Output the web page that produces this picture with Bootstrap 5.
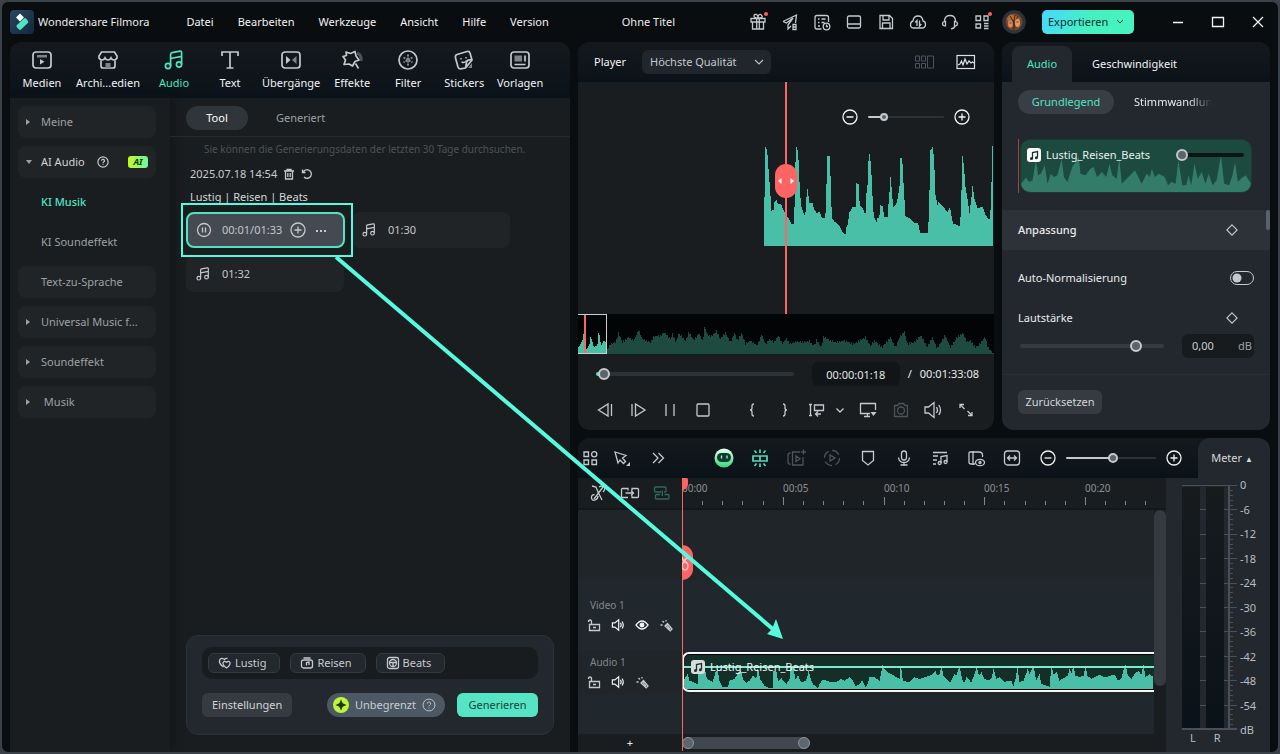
<!doctype html>
<html lang="de" data-bs-theme="dark">
<head>
<meta charset="utf-8">
<meta name="viewport" content="width=device-width, initial-scale=1">
<title>Wondershare Filmora</title>
<link href="https://cdn.jsdelivr.net/npm/bootstrap@5.3.0/dist/css/bootstrap.min.css" rel="stylesheet">
<style>
:root{--teal:#50e3c2;--bg:#0a0d0f;--pane:#1a1d1f;--soft:#212427;--slate:#22282d;--red:#ff6464;--mark:#55fbdc;--line:#c4c9ce}
body{font:11px/16px "Noto Sans","Open Sans",sans-serif;background:#3a4148;color:#e9ebed}
button,input,select{font:inherit;color:inherit}
button{background:none;border:0;padding:0}
svg{display:block;flex:none}
.ico{width:20px;height:20px;fill:none;stroke:var(--line);stroke-width:1.3}
.i10{width:10px;height:10px}.i12{width:12px;height:12px}.i14{width:14px;height:14px}.i16{width:16px;height:16px}
.white{stroke:#f2f3f4}.dim{stroke:#4d5358}.heavy{stroke-width:1.7}
.solid{fill:var(--line);stroke:none}.grey{fill:#7d838a;stroke:none}
.gap12{gap:12px}.gap10{gap:10px}.gap20{gap:20px}
.app{background:var(--bg);border:2px solid #3a4148;border-radius:8px;min-height:100vh;overflow:hidden}
.titlebar{height:40px;padding:0 10px 0 8px}
.logo{width:24px;height:24px}
.menu{margin-left:37px}
.menu a{color:#f2f3f4;text-decoration:none}
.dot{width:4px;height:4px;border-radius:50%;background:#ff5c5c;top:0;right:0}
.avatar{width:24px;height:24px;margin-left:-2px}
.export{width:92px;height:24px;border-radius:5px;background:linear-gradient(115deg,#47d8ff,#47f0c0 50%,#45f4bd);color:#10302c;padding-left:6px}
.winctl{gap:20px;margin-left:22px}
.work{display:grid;grid-template-columns:minmax(0,560fr) minmax(0,416fr) 268px;grid-template-rows:388px minmax(314px,1fr);gap:8px;padding:0 8px}
.pane{background:var(--pane);border-radius:12px;overflow:hidden}
.bar{background:linear-gradient(#15191d,#0a1219)}
.media{grid-row:1/3}
.media-tabs{height:56px;padding-left:4px}
.media-tabs button{min-width:56px;padding:0 4px;text-align:center;color:#f2f3f4;height:56px}
.media-tabs .wide{min-width:66px}
.media-tabs .xwide{min-width:76px}
.media-tabs svg{margin:0 auto 5px;width:24px;height:20px;stroke-width:1.7}
.media-tabs .on{color:var(--teal)}.media-tabs .on svg{stroke:var(--teal)}
.side{width:160px;padding:8px;box-shadow:4px 0 6px #14171a}
.side button{height:32px;width:138px;border-radius:8px;color:#9da1a5;text-align:left}
.side .boxed{background:var(--soft)}
.side .open{color:#d0d3d6}
.side .picked{color:var(--teal);font-weight:500}
.arr,.noarr{width:23px;padding-left:8px}
.arr::before{content:"";display:block;border:3px solid transparent;border-left:4px solid #9da1a5;border-right:0;width:0}
.arr.down::before{border:3px solid transparent;border-top:4px solid #9da1a5;border-bottom:0}
.helpdot{margin-left:12px;stroke-width:2}
.ai{width:20px;height:12px;border-radius:3px;background:linear-gradient(90deg,#c4fb20,#6df5a0);color:#163018;font:italic 700 9px/12px "Noto Sans",sans-serif;text-align:center}
.sub{height:39px;padding:2px 0 0 16px;border-bottom:1px solid #25292c;gap:12px}
.sub button{height:24px;border-radius:12px;color:#9da1a5}
.sub .on{background:#303539;color:#fff;width:62px}
.note{font-size:10px;color:#4d5256;padding:4px 0 0 18px}
.lib{padding:0 16px}
.stamp{padding:9px 0 7px 4px;color:#c7cbcf;gap:6px}
.title3{padding:0 0 7px 4px;color:#d4d7da}
.cards{display:grid;grid-template-columns:158px 158px;gap:8px}
.clipcard{height:36px;background:var(--soft);border-radius:8px;padding:0 10px;color:#c2c6ca;gap:12px}
.clipcard.on{position:relative;z-index:1;background:#454a52;border:2px solid var(--teal);padding:0 8px;gap:6px;width:159px}
.frame{position:absolute;inset:-11px -10px -11px -7px;border:2px solid var(--mark);pointer-events:none}
.prompt{margin:auto 16px 17px;border:1px solid #2b3136;background:var(--slate);border-radius:12px;padding:11px 15px 17px}
.tags{height:32px;background:#181c1e;border-radius:10px;padding:0 6px;gap:10px;margin-bottom:14px}
.tags button{height:20px;border:1px solid #343a3f;border-radius:6px;background:var(--slate);color:#c7cbcf;padding:0 13px 0 9px;gap:3px}
.pbtn{height:24px;border-radius:6px;background:#353b41;color:#d2d5d8;padding:0 10px}
.reset{padding:0 6px;width:84px}
.unl{height:24px;border-radius:12px;background:#4c5864;color:#c8ced4;width:118px;padding:0 9px 0 6px}
.gen{background:#55e5c5;color:#19413a;width:81px}
.phead{height:40px;padding:0 18px 0 16px;color:#f2f3f4}
.form-select.qual{width:129px;height:24px;border:0;border-radius:6px;font-size:11px;line-height:16px;margin-left:16px;background-color:#20262c;color:var(--line);padding:0 20px 0 8px;background-position:right 7px center;background-size:10px;background-image:url("data:image/svg+xml,%3Csvg xmlns='http://www.w3.org/2000/svg' viewBox='0 0 10 10'%3E%3Cpath d='M1 3l4 4 4-4' fill='none' stroke='%23b8bdc2' stroke-width='1.2'/%3E%3C/svg%3E")}
.stage{height:232px;position:relative}
.zoomer{padding:25px 22px 19px 0;gap:8px}
.zoomer input{width:76px}
.wavebox{width:229px;height:100px;margin-left:auto;margin-right:1px}
.needle{position:absolute;left:50%;top:0;bottom:0;width:2px;background:var(--red);margin-left:-1px}
.grip{position:absolute;left:50%;top:82px;width:22px;height:34px;margin-left:-11px;border-radius:11px;background:var(--red)}
.over{height:40px;background:#030405;position:relative}
.over svg{width:100%;height:40px}
.win{position:absolute;left:0;top:0;width:29px;height:40px;border:1px solid #c9ced2;border-left:0}
.win::after{content:"";position:absolute;left:6px;top:0;bottom:0;width:2px;background:var(--red)}
input[type=range]{appearance:none;background:none;height:14px;margin:0;display:block;--on:var(--line);--off:#2d3237;--th:12px}
input[type=range]::-webkit-slider-runnable-track{height:var(--tr,2px);border-radius:2px;background:linear-gradient(90deg,var(--on) var(--v,50%),var(--off) var(--v,50%))}
input[type=range]::-webkit-slider-thumb{appearance:none;width:var(--th);height:var(--th);margin-top:calc((var(--tr,2px) - var(--th))/2);border-radius:50%;border:2px solid var(--line);background:#5c636b}
input[type=range].sm-thumb{--th:8px}
input[type=range].md-thumb{--th:10px}
input[type=range].seek{--on:#50e3c2;--tr:4px}
input[type=range].flat{--on:#353a42;--off:#353a42;--tr:4px}
input[type=range].clipvol{--on:#0b1512;--off:#0b1512;--tr:4px;width:68px}
.seekrow{padding:8px 15px 0 18px}
.tc{height:24px;border:0;border-radius:6px;background:#121517;color:#e3e5e7;text-align:center;width:88px;margin-left:18px}
.ctrls{padding:14px 18px 0 17px}
.side-tabs{height:40px;padding-left:10px}
.side-tabs button{height:36px;margin-top:4px;padding:0 20px;color:#f2f3f4;border-radius:8px 8px 0 0}
.side-tabs .on{background:var(--slate);color:var(--teal);width:60px;padding:0}
.insp{background:var(--slate)}
.modes{padding:8px 16px 25px;gap:20px}
.modes .on{height:24px;width:96px;border-radius:12px;background:#383e45;color:var(--teal)}
.fade-r{-webkit-mask-image:linear-gradient(90deg,#000 70%,transparent);mask-image:linear-gradient(90deg,#000 70%,transparent)}
.aclip{height:54px;margin:0 18px 17px 16px;border-left:1px solid #a1453f;padding-left:1px}
.aclip>div{position:relative;height:54px;background:#1c4a3f;border-radius:10px;border:1px solid #173a31;overflow:hidden}
.aclip .wv{position:absolute;inset:0;width:100%;height:52px}
.aclip .top{position:relative;height:30px;padding:0 7px 0 6px;color:#e8f0ee;gap:5px}
.sec{height:40px;background:#2d3238;padding:0 32px 0 16px;position:relative;font-weight:500}
.sec::after{content:"";position:absolute;right:0;top:0;width:4px;height:20px;border-radius:2px;background:#59616a}
.opt{padding:20px 16px 12px}
.opt2{padding:12px 32px 8px 16px}
.volrow{padding:0 16px 16px 18px;gap:18px}
.field{width:72px;height:24px;border-radius:6px;background:#181b1d;padding:0 2px 0 10px;color:#9da1a5}
.field input{width:36px;border:0;background:none;color:#c9cdd1;padding:0}
.form-check-input.sw{width:24px;height:14px;margin:0;float:none;display:block;background-color:transparent;border:1px solid var(--line);border-radius:7px;background-position:left center;background-image:url("data:image/svg+xml,%3Csvg xmlns='http://www.w3.org/2000/svg' viewBox='-4 -4 8 8'%3E%3Ccircle r='3' fill='%23c4c9ce'/%3E%3C/svg%3E")}
.foot{border-top:1px solid #2a2f34;padding:15px 16px}
.tl{grid-column:2/4;background:var(--pane);border-radius:12px 12px 0 0}
.tlbar{height:40px;border-radius:12px 12px 0 0}
.tlleft{padding:0 14px 0 2px}
.tltools{margin-left:46px}
.tltools input{width:90px;margin:0 -8px}
.tltools input[type=range]{margin:0 -8px}
.meterbtn{width:72px;height:40px;background:var(--slate);border-radius:12px 12px 0 0;color:#d6d9dc;padding-right:4px}
.tri{font-size:8px}
.heads{width:104px;padding-left:12px;flex:none}
.row-r{height:32px;border-bottom:2px solid #12171c}
.row-r .heads{gap:12px;padding-left:10px}
.lanes{position:relative}
.lane{background:#20272d}
.lane.alt{background:#1f2528}
.lane .heads{color:#81878d;font-size:10px;line-height:14px}
.l-video{height:70px}.l-audio{height:45px}.l-free{height:39px}
.l-video .heads{padding-top:18px}.l-audio .heads{padding-top:5px}
.trk{gap:10px;margin:6px 0 0 -3px}
.tclip{height:40px;margin-top:2px;border:2px solid #f4f6f7;border-right:0;border-radius:7px 0 0 7px;background:#142e28;position:relative;overflow:hidden;box-shadow:inset 0 1px #000,inset 0 -1px #000}
.tclip .wv{position:absolute;left:0;bottom:1px;width:469px;height:24px}
.vol{position:absolute;left:0;right:0;top:12px;height:2px;background:#7be9d0}
.tlabel{position:relative;color:#f2f3f4;padding:5px 0 0 7px;gap:5px}
.vbar{width:12px}
.vbar i{display:block;height:176px;border-radius:6px;background:#353a41}
.trackfoot{height:18px;padding-bottom:1px}
.hbar{width:128px;height:12px;border-radius:6px;background:#40474e}
.hbar i{width:12px;height:12px;border-radius:50%;background:#5d666f;border:1px solid #8b949c}
.ph{position:absolute;left:104px;top:0;bottom:1px;width:1px;background:var(--red)}
.flag{position:absolute;left:0;top:0;width:6px;height:12px;background:var(--red);border-radius:0 2px 8px 0}
.cut{position:absolute;left:0;top:67px;width:11px;height:35px;border-radius:0 11px 11px 0;background:var(--red)}
.meter{width:104px;background:var(--slate);padding-left:16px;color:#b9bec3}
.lr{padding-left:8px;gap:18px}
.scale{height:261px;padding-left:2px;margin-top:-1px}
.callout{position:absolute;left:0;top:0;width:100%;height:100%;pointer-events:none;z-index:2}
</style>
</head>
<body>
<svg width="0" height="0" class="position-absolute" aria-hidden="true">
<symbol id="music" viewBox="0 0 20 20"><circle cx="4" cy="16" r="2.6"/><circle cx="15" cy="14.5" r="2.6"/><path d="M6.600 16V4.500Q6.600 3 8 2.700L16 1.200Q17.600 1 17.600 2.500V14.500M6.600 8.500L17.600 6.300"/></symbol>
<symbol id="plus" viewBox="0 0 20 20"><circle cx="10" cy="10" r="7"/><path d="M6.500 10h7M10 6.500v7"/></symbol>
<symbol id="minus" viewBox="0 0 20 20"><circle cx="10" cy="10" r="7"/><path d="M6.500 10h7"/></symbol>
<symbol id="ask" viewBox="0 0 20 20"><circle cx="10" cy="10" r="8.500"/><path d="M7.500 8a2.500 2.300 0 1 1 3.700 2q-1.200.8-1.200 2M10 13.800v1.200"/></symbol>
<symbol id="dia" viewBox="0 0 14 14"><path d="M7 1l6 6-6 6-6-6z"/></symbol>
<symbol id="spk" viewBox="0 0 20 20"><path d="M2 7h3.500L11 2.500v15L5.500 13H2zM13.500 7q2 3 0 6M15.800 5q3.400 5 0 10"/></symbol>
<symbol id="lock" viewBox="0 0 14 14"><path d="M2.500 6.500h10v6h-10zM4.500 6.500V4Q4.500 2 3 2T1.500 4M6 9.500h3"/></symbol>
<symbol id="mic" viewBox="0 0 14 14"><path d="M6 8l2.500-2.500L13 11l-1.800 1.800zM7.300 6.600l3.700 4.500M3.500 3l1.500 1.500M7 2v1.500M1.500 7H3.500"/></symbol>
<symbol id="clipnote" viewBox="0 0 14 14"><rect width="14" height="14" rx="3"/><path d="M5.500 10.500V4.500L10.500 3.500V9.500" fill="none" stroke="#17352e" stroke-width="1.300"/><circle cx="4.500" cy="10.500" r="1.500" fill="#17352e"/><circle cx="9.400" cy="9.700" r="1.500" fill="#17352e"/></symbol>
</svg>
<div class="app d-flex flex-column position-relative">
<header class="titlebar d-flex align-items-center">
  <svg class="logo" viewBox="0 0 24 24"><defs><linearGradient id="lg" x1="0" y1="0" x2="1" y2="1"><stop stop-color="#2c4560"/><stop offset="1" stop-color="#12293c"/></linearGradient></defs><rect width="24" height="24" rx="4" fill="url(#lg)"/><path d="M10 3.500l4 4-4 4-4-4z" fill="#fff"/><path d="M14 8.500q1-1 2 0l2 2.500q.6 1-.2 2L11 19.500q-1 .8-2 0l-2.300-2.500q-.8-1 .2-2z" fill="#50e3c2"/></svg>
  <span class="ms-1">Wondershare Filmora</span>
  <nav class="menu d-flex gap-4">
    <a href="#">Datei</a><a href="#">Bearbeiten</a><a href="#">Werkzeuge</a><a href="#">Ansicht</a><a href="#">Hilfe</a><a href="#">Version</a>
  </nav>
  <span class="mx-auto">Ohne Titel</span>
  <div class="d-flex align-items-center gap12">
    <button class="position-relative" aria-label="Geschenk"><svg class="ico" viewBox="0 0 20 20"><path d="M3 6.500h14v3.500H3zM4.500 10v7h11v-7M8.700 6.500V17M11.300 6.500V17M10 6Q6 6 6 4t2.500-1.500Q10 3 10 6q0-3 1.500-3.500T14 4t-4 2"/></svg><i class="dot position-absolute"></i></button>
    <button aria-label="Senden"><svg class="ico" viewBox="0 0 20 20"><path d="M3 9.500L16.500 3l-1 8M3 9.500l3.500 1.500L13 6l-5 7v4l3-3"/><path d="M13 12.500h3v5h-3zM13 15h3"/></svg></button>
    <button aria-label="Aufgaben"><svg class="ico" viewBox="0 0 20 20"><path d="M9.500 17H5q-2 0-2-2V5.500q0-2 2-2h9.500q2 0 2 2V10M6 7h1.500M9.500 7h4M6 10.500h1.500M9.500 10.500h3M6 14h2"/><circle cx="14.500" cy="14.500" r="3.300"/><path d="M14.500 12.500v2h1.500"/></svg></button>
    <button aria-label="Layout"><svg class="ico" viewBox="0 0 20 20"><rect x="3.500" y="4" width="13" height="12" rx="1.500"/><path d="M3.500 12h13"/></svg></button>
    <button aria-label="Speichern"><svg class="ico" viewBox="0 0 20 20"><path d="M4 3.500h9.500l3 3v10H4zM7 3.500V8h6V3.500M6.500 16.500V11h7.500v5.500"/></svg></button>
    <button aria-label="Cloud"><svg class="ico" viewBox="0 0 20 20"><path d="M6 16q-3.500 0-3.500-3.300Q2.500 9.500 5 9q.5-5 5-5t5 5q2.500.5 2.500 3.200 0 3.800-3.500 3.800zM9 14V8.500L7.200 10.500M11.500 8.500V14l1.800-2"/></svg></button>
    <button aria-label="Support"><svg class="ico" viewBox="0 0 20 20"><path d="M4.500 10V8.500Q5 3.500 10 3.500t5.500 5V10M4.500 9.500q-2 .3-2 2.200t2 2.200h1V9.500zM15.500 9.500q2 .3 2 2.200t-2 2.200h-1V9.500zM15 14q-.5 2.500-4 2.800"/></svg></button>
    <button class="position-relative" aria-label="Apps"><svg class="ico" viewBox="0 0 20 20"><path d="M4 4h4.500v4.500H4zM12 4h4v4.500h-4zM4 12h4.500v4H4zM12 11.500h4.500M12 14h4.500M12 16.500h4.500"/></svg><i class="dot position-absolute"></i></button>
    <svg class="avatar" viewBox="0 0 24 24"><circle cx="12" cy="12" r="11.800" fill="#2b333c"/><circle cx="12" cy="12" r="8.500" fill="#7a4526"/><path d="M5 8q3-5 7-3t6 4l-2 4-5-3-5 3z" fill="#b06c33"/><path d="M8 6l3 5M13 5l-1 6M16 6l-2 4" stroke="#4a271a" fill="none"/><ellipse cx="8.500" cy="14" rx="2.400" ry="3.500" fill="#d98c5c"/><ellipse cx="15.500" cy="13" rx="2.500" ry="4" fill="#e09a68"/><path d="M11.500 10q1 5 .3 10" stroke="#4a271a" stroke-width="1.400" fill="none"/><path d="M7.500 13h2M14.500 12h2" stroke="#6b3323"/></svg>
    <button class="export d-flex align-items-center ms-1">Exportieren<svg class="ms-2" width="8" height="6" viewBox="0 0 8 6" fill="none" stroke="#10302c"><path d="M1 1l3 3 3-3"/></svg></button>
    <div class="d-flex winctl">
      <button aria-label="Minimieren"><svg class="ico white" viewBox="0 0 20 20"><path d="M5 10.500h10"/></svg></button>
      <button aria-label="Maximieren"><svg class="ico white" viewBox="0 0 20 20"><path d="M4.500 5.500h11v9h-11z"/></svg></button>
      <button aria-label="Schließen"><svg class="ico white" viewBox="0 0 20 20"><path d="M5 5l10 10M15 5L5 15"/></svg></button>
    </div>
  </div>
</header>
<main class="work flex-fill">
<section class="pane media d-flex flex-column rounded-bottom-0">
  <nav class="media-tabs bar d-flex">
    <button><svg class="ico" viewBox="0 0 24 20"><rect x="3" y="2" width="18" height="16" rx="3"/><path d="M7 5h10v2.500H7z" class="grey"/><path d="M10 9l4.500 2.700-4.500 2.700z" class="solid"/></svg>Medien</button>
    <button class="xwide"><svg class="ico" viewBox="0 0 24 20"><path d="M5 9v7q0 2 2 2h10q2 0 2-2V9M5.500 2h13L21 6v2q-1 2-3 2t-3-2q-1 2-3 2T9 8q-1 2-3 2T3 8V6z"/><path d="M9.500 13h5v5h-5z" class="grey"/></svg>Archi...edien</button>
    <button class="on"><svg class="ico" viewBox="0 0 20 20"><use href="#music"/></svg>Audio</button>
    <button><svg class="ico" viewBox="0 0 24 20"><path d="M4 6V2h16v4M12 2v16M8.500 18h7"/></svg>Text</button>
    <button class="wide"><svg class="ico" viewBox="0 0 24 20"><rect x="3" y="2" width="18" height="16" rx="3"/><path d="M7 6l4.500 4L7 14z" class="solid"/><path d="M17.500 6L13 10l4.500 4z" class="grey"/></svg>Übergänge</button>
    <button><svg class="ico" viewBox="0 0 24 20"><path d="M17 3q5 2 4 8" stroke="#4b5157" stroke-width="3"/><path d="M6 2l4.500 1.500L15 1.500 16 6l3 4-4 1.500L12.500 16 9 14l-5 .5L5.500 10 3 6.500 6.500 5.500z" fill="#12171b" stroke-linejoin="round"/><path d="M15.500 13.500l3 5"/></svg>Effekte</button>
    <button><svg class="ico" viewBox="0 0 24 20"><circle cx="12" cy="10" r="9"/><path d="M12 4.500v11M7.500 7.500l9 5M16.500 7.500l-9 5" stroke="#80868c" stroke-width="2" stroke-dasharray="2 1"/></svg>Filter</button>
    <button><svg class="ico" viewBox="0 0 24 20"><path d="M5 4.500L15 1.500q2.500-.5 3 1.500l2 7-6.500 8-5 .8Q6.500 19 6 17L3.500 8Q3 5 5 4.500zM20 10q-5-1-5.500 2.500L13.500 18"/><path d="M9 8v1.500M14 7v1.500M9.500 12q3.500 1.500 5-1.500" stroke-width="1.400"/><path d="M20 13v5h-4z" class="grey"/></svg>Stickers</button>
    <button><svg class="ico" viewBox="0 0 24 20"><rect x="3" y="2" width="18" height="16" rx="3"/><path d="M6.500 5.500h7.500v6H6.500z" class="grey"/><path d="M17 5.500v6M6.500 14.500h11"/></svg>Vorlagen</button>
  </nav>
  <div class="d-flex flex-fill">
    <nav class="side d-flex flex-column gap-2">
      <button class="boxed d-flex align-items-center"><span class="arr"></span>Meine</button>
      <button class="boxed open d-flex align-items-center"><span class="arr down"></span>AI Audio<svg class="ico i12 helpdot"><use href="#ask"/></svg><span class="ai ms-auto me-2">AI</span></button>
      <button class="picked d-flex align-items-center"><span class="noarr"></span>KI Musik</button>
      <button class="d-flex align-items-center"><span class="noarr"></span>KI Soundeffekt</button>
      <button class="boxed d-flex align-items-center"><span class="noarr"></span>Text-zu-Sprache</button>
      <button class="boxed d-flex align-items-center"><span class="arr"></span>Universal Music f...</button>
      <button class="boxed d-flex align-items-center"><span class="arr"></span>Soundeffekt</button>
      <button class="boxed d-flex align-items-center"><span class="arr"></span>&nbsp;Musik</button>
    </nav>
    <div class="flex-fill d-flex flex-column">
      <div class="sub d-flex align-items-center"><button class="on">Tool</button><button class="px-3">Generiert</button></div>
      <div class="lib">
        <div class="note">Sie können die Generierungsdaten der letzten 30 Tage durchsuchen.</div>
        <div class="stamp d-flex align-items-center">2025.07.18 14:54
          <svg class="ico i12" viewBox="0 0 12 12"><path d="M1 3h10M4 3V1.500h4V3M2.500 3v8h7V3M4.800 5v4M7.200 5v4"/></svg>
          <svg class="ico i12" viewBox="0 0 12 12"><path d="M1.500 1.500V4.500h3M2 4Q4 1.300 7 1.800a4.300 4.300 0 1 1-4 7.200"/></svg></div>
        <div class="title3">Lustig | Reisen | Beats</div>
        <div class="cards">
          <div class="clipcard on d-flex align-items-center">
            <button aria-label="Pause"><svg class="ico i16" viewBox="0 0 16 16"><circle cx="8" cy="8" r="6.500"/><path d="M6.500 5.500v5M9.500 5.500v5"/></svg></button>
            <span class="ps-1 text-nowrap">00:01/01:33</span>
            <button aria-label="Hinzufügen"><svg class="ico"><use href="#plus"/></svg></button>
            <button aria-label="Mehr"><svg class="ico i16 solid" viewBox="0 0 16 16"><path d="M2 8h2v2H2zM6 8h2v2H6zM10 8h2v2h-2z"/></svg></button>
            <span class="frame"></span>
          </div>
          <div class="clipcard d-flex align-items-center"><svg class="ico i14 heavy"><use href="#music"/></svg>01:30</div>
          <div class="clipcard d-flex align-items-center"><svg class="ico i14 heavy"><use href="#music"/></svg>01:32</div>
        </div>
      </div>
      <div class="prompt">
        <div class="tags d-flex align-items-center">
          <button class="d-flex align-items-center"><svg class="ico i14" viewBox="0 0 14 14"><path d="M5.500 11Q1 8 1.500 4.500 2 2 4.500 2.500 6 3 6.500 3.500 7.500 2 9.500 2.500M8.500 12Q4.500 9.500 5 6.700 6 4.500 8.500 6.200 11 4.500 12 6.700 12.500 9.500 8.500 12z"/></svg>Lustig</button>
          <button class="d-flex align-items-center"><svg class="ico i14" viewBox="0 0 14 14"><rect x="1.500" y="4" width="11" height="8" rx="2"/><path d="M3.500 2h7M6.500 9.500V6.500L9 6v3"/></svg>Reisen</button>
          <button class="d-flex align-items-center"><svg class="ico i14" viewBox="0 0 14 14"><rect x="1.500" y="1.500" width="11" height="11" rx="2"/><circle cx="7" cy="7" r="3.500"/><path d="M4 6.500h6M7 6.500V10"/></svg>Beats</button>
        </div>
        <div class="d-flex gap12">
          <button class="pbtn">Einstellungen</button>
          <button class="unl d-flex align-items-center ms-auto"><svg width="16" height="16" viewBox="0 0 16 16"><circle cx="8" cy="8" r="8" fill="#c0f53a"/><path d="M8 2.500l1.700 3.800L13.500 8 9.700 9.700 8 13.500 6.300 9.700 2.500 8l3.800-1.700z" fill="#20360c"/></svg><span class="mx-auto">Unbegrenzt</span><svg class="ico i14"><use href="#ask"/></svg></button>
          <button class="pbtn gen">Generieren</button>
        </div>
      </div>
    </div>
  </div>
</section>

<section class="pane">
  <div class="phead bar d-flex align-items-center"><label for="q">Player</label>
    <select id="q" class="form-select qual"><option>Höchste Qualität</option></select>
    <div class="d-flex ms-auto gap20">
    <svg class="dim" width="22" height="16" viewBox="0 0 22 16" fill="none"><path d="M1.500 2h4v5h-4zM7.500 2h4v5h-4zM1.500 9.500h4v4.500h-4zM7.500 9.500h4v4.500h-4zM13.500 2h6v12h-6z"/></svg>
    <svg width="20" height="16" viewBox="0 0 20 16" fill="none" stroke="#dfe2e5" stroke-width="1.200"><rect x="1" y="1.500" width="17.500" height="13"/><path d="M2 11l2-1 1.500-3 1.500 4 2-6 2 5 2-3 2 2 1.500-1 1.500 1"/></svg></div>
  </div>
  <div class="stage">
    <div class="zoomer d-flex align-items-center justify-content-end">
      <button aria-label="Verkleinern"><svg class="ico white"><use href="#minus"/></svg></button>
      <input type="range" class="sm-thumb" aria-label="Zoom" value="18" style="--v:18%">
      <button aria-label="Vergrößern"><svg class="ico white"><use href="#plus"/></svg></button>
    </div>
    <svg class="wavebox" id="w1" viewBox="0 0 228 100" preserveAspectRatio="none" shape-rendering="crispEdges"></svg>
    <span class="needle"></span>
    <span class="grip d-flex align-items-center justify-content-center"><svg width="18" height="8" viewBox="0 0 18 8" fill="#fff"><path d="M4.500 1v6L1 4zM13.500 1v6L17 4z"/></svg></span>
  </div>
  <div class="over"><svg id="w2" viewBox="0 0 416 40" preserveAspectRatio="none" shape-rendering="crispEdges"></svg><span class="win"></span></div>
  <div class="seekrow d-flex align-items-center">
    <input type="range" aria-label="Position" value="1" class="flex-fill seek" style="--v:3%">
    <input class="tc" aria-label="Zeit" value="00:00:01:18"><span class="mx-2">/</span><span>00:01:33:08</span>
  </div>
  <div class="ctrls d-flex align-items-center justify-content-between">
    <button aria-label="Zurück"><svg class="ico" viewBox="0 0 20 20"><path d="M13 4v12L3.500 10zM16.500 4v12"/></svg></button>
    <button aria-label="Vor"><svg class="ico" viewBox="0 0 20 20"><path d="M7.500 4v12L17 10zM4 4v12"/></svg></button>
    <button aria-label="Pause"><svg class="ico" viewBox="0 0 20 20"><path d="M6 4v12M14 4v12"/></svg></button>
    <button aria-label="Stopp"><svg class="ico" viewBox="0 0 20 20"><rect x="4" y="4" width="12" height="12" rx="1"/></svg></button>
    <button aria-label="In" class="ms-3"><svg class="ico" viewBox="0 0 20 20"><path d="M12 4q-2 0-2 2v2q0 2-2 2 2 0 2 2v2q0 2 2 2"/></svg></button>
    <button aria-label="Out"><svg class="ico" viewBox="0 0 20 20"><path d="M9 4q2 0 2 2v2q0 2 2 2-2 0-2 2v2q0 2-2 2"/></svg></button>
    <button aria-label="Einfügen" class="d-flex align-items-center gap-2"><svg class="ico" viewBox="0 0 20 20"><path d="M2 4.500h3M3.500 4.500v11M2 15.500h3M7.500 5h9v5.500h-9zM14 14H8.500M11 11.500L8.500 14l2.500 2.500"/></svg><svg class="ico i10" viewBox="0 0 10 10"><path d="M1.500 3.500L5 7l3.500-3.500"/></svg></button>
    <button aria-label="Anzeige"><svg class="ico" viewBox="0 0 20 20"><path d="M12 13.500H2.500v-10h15V10M6 16.500h6M9.500 13.500v3"/><path d="M12.500 12h6l-3 4z" class="solid"/></svg></button>
    <button aria-label="Schnappschuss"><svg class="ico dim" viewBox="0 0 20 20"><path d="M3.500 5.500H6.500L8 3.500h4.500L14 5.500h2.500v11h-13z"/><circle cx="10" cy="10.500" r="3.500"/></svg></button>
    <button aria-label="Ton"><svg class="ico"><use href="#spk"/></svg></button>
    <button aria-label="Vollbild"><svg class="ico" viewBox="0 0 20 20"><path d="M4 8V4.500h4M4.500 5l4 4M16 12v3.500h-4M15.500 15l-4-4"/></svg></button>
  </div>
</section>

<section class="pane insp">
  <nav class="side-tabs bar d-flex"><button class="on">Audio</button><button>Geschwindigkeit</button></nav>
  <div class="modes d-flex"><button class="on">Grundlegend</button><button class="fade-r">Stimmwandlun</button></div>
  <div class="aclip"><div><svg class="wv" id="w3" viewBox="0 0 232 52" preserveAspectRatio="none"></svg>
    <div class="top d-flex align-items-center"><svg width="14" height="14" fill="#fff"><use href="#clipnote"/></svg><span>Lustig_Reisen_Beats</span><input type="range" class="ms-auto clipvol" aria-label="Clip" value="0"></div></div></div>
  <div class="sec d-flex align-items-center justify-content-between">Anpassung<svg class="ico i12"><use href="#dia"/></svg></div>
  <div class="opt d-flex align-items-center justify-content-between"><label for="an">Auto-Normalisierung</label><input class="form-check-input sw" type="checkbox" role="switch" id="an"></div>
  <div class="opt2 d-flex align-items-center justify-content-between"><label for="vol">Lautstärke</label><svg class="ico i12"><use href="#dia"/></svg></div>
  <div class="volrow d-flex align-items-center"><input id="vol" type="range" value="83" class="flex-fill flat"><div class="field d-flex align-items-center justify-content-between"><input aria-label="Dezibel" value="0,00">dB</div></div>
  <div class="foot"><button class="pbtn reset">Zurücksetzen</button></div>
</section>

<section class="tl d-flex flex-column">
  <div class="tlbar bar d-flex align-items-center">
    <div class="tlleft d-flex align-items-center flex-fill">
      <div class="d-flex gap12">
      <button aria-label="Medien"><svg class="ico" viewBox="0 0 20 20"><path d="M4 4h4.500v4.500H4zM4 12h4.500v4.500H4zM12 12h4.500v4.500H12z"/><circle cx="14.200" cy="6.200" r="2.600"/></svg></button>
      <button aria-label="Auswahl"><svg class="ico" viewBox="0 0 20 20"><path d="M3 4l11 3.500-3.500 2.500 3 3.500-2 2-3.500-3.500L6 15z"/><path d="M18 14v4h-4z" class="solid"/></svg></button>
      <button aria-label="Mehr" class="ms-1"><svg class="ico" viewBox="0 0 20 20"><path d="M5 5l5 5-5 5M10.500 5l5 5-5 5"/></svg></button>
      </div>
      <div class="tltools d-flex align-items-center flex-fill justify-content-between">
      <button aria-label="KI-Assistent"><svg class="ico" viewBox="0 0 20 20"><defs><linearGradient id="bot" x2="0" y2="1"><stop stop-color="#e8fff2"/><stop offset="1" stop-color="#35d979"/></linearGradient></defs><circle cx="10" cy="10" r="9.500" fill="url(#bot)" stroke="none"/><rect x="3" y="5" width="14" height="9" rx="4.500" fill="#0d3b2f" stroke="none"/><path d="M7.500 7.500v3M13 7.500v3" stroke="#a5f5ce"/></svg></button>
      <button aria-label="Magnet"><svg class="ico" viewBox="0 0 20 20"><path d="M3 8h14v5H3zM10 8v5M10 1.500V5M4.500 2.500l2 2.500M15.500 2.500l-2 2.500M10 15.500V19M6.500 15.500l-2 2.500M13.500 15.500l2 2.500" stroke="#50dcb9" stroke-width="1.700"/></svg></button>
      <button aria-label="KI-Video"><svg class="ico dim" viewBox="0 0 20 20"><path d="M4.500 5Q2 5 2 7v7q0 2 2.500 2.500M14 4H6.500v13H17V9M10 8v5.500l4-2.800zM17.500 1.500v5M15 4h5"/></svg></button>
      <button aria-label="Rendern"><svg class="ico dim" viewBox="0 0 20 20"><circle cx="10" cy="10" r="7.500" stroke-dasharray="8 3.800"/><path d="M8 7v6l5-3z"/></svg></button>
      <button aria-label="Marker"><svg class="ico" viewBox="0 0 20 20"><path d="M4.500 3.500h11v9L10 17l-5.500-4.500z"/></svg></button>
      <button aria-label="Aufnahme"><svg class="ico" viewBox="0 0 20 20"><rect x="7.500" y="3" width="5" height="9" rx="2.500"/><path d="M4.500 9.500q.5 5 5.500 5t5.500-5M10 14.500V17M6.500 17h7"/></svg></button>
      <button aria-label="Audioliste"><svg class="ico" viewBox="0 0 20 20"><path d="M3 4.500h14M3 8h5M3 12h4M3 16h3M11 15V8.500l6-1V14"/><circle cx="9.700" cy="15" r="1.500"/><circle cx="15.500" cy="14" r="1.500"/></svg></button>
      <button aria-label="Vorschau"><svg class="ico" viewBox="0 0 20 20"><path d="M9 16H5q-2 0-2-2V5q0-1 1-1h9q3.500 0 3.500 3v2M7 3v14"/><ellipse cx="14" cy="14.500" rx="4.500" ry="3.200"/><circle cx="14" cy="14.500" r="1"/></svg></button>
      <button aria-label="Einpassen"><svg class="ico" viewBox="0 0 20 20"><rect x="2.500" y="3" width="15" height="14" rx="3"/><path d="M6 10h8M8 7.500L5.500 10 8 12.500M12 7.500l2.500 2.500-2.500 2.500"/></svg></button>
      <button aria-label="Verkleinern"><svg class="ico white"><use href="#minus"/></svg></button>
      <input type="range" class="md-thumb" aria-label="Timeline-Zoom" value="52" style="--v:52%">
      <button aria-label="Vergrößern"><svg class="ico white"><use href="#plus"/></svg></button>
      </div>
    </div>
    <button class="meterbtn">Meter <span class="tri">▲</span></button>
  </div>
  <div class="d-flex flex-fill">
    <div class="lanes flex-fill d-flex flex-column">
      <div class="row-r d-flex">
        <div class="heads d-flex align-items-center">
          <svg class="ico" viewBox="0 0 20 20"><path d="M4 3l4 1 2 5 4 8M15 4L6 16"/><path d="M6.500 11.500Q3 12 3.500 15T7 17t3-4M11 4q3-2 5 0t-1 5"/></svg>
          <svg class="ico" viewBox="0 0 20 20"><path d="M8 14.500H2.500q-1 0-1-1v-7q0-1 1-1H8v2M12 7.500v-2h5.500q1 0 1 1v7q0 1-1 1H12v-2M5.500 10h8M11 7.500l2.500 2.500-2.500 2.500"/></svg>
          <svg class="ico" viewBox="0 0 20 20"><path d="M9 9H3.500q-1 0-1-1V5q0-1 1-1H13q1 0 1 1v3q0 1-1 1h-1M8 11.500H4.500q-1 0-1 1V15q0 1 1 1H16q1 0 1-1v-2.500q0-1-1-1h-3.500M10.300 7.500v5.500" stroke="#2e6a5b"/></svg>
        </div>
        <svg id="ruler" width="472" height="30" viewBox="0 0 472 30" stroke="#7f858b" fill="#8b9197" font-size="10"></svg>
      </div>
      <div class="d-flex flex-fill">
      <div class="flex-fill d-flex flex-column">
        <div class="lane alt flex-fill"></div>
        <div class="lane l-video"><div class="heads">Video 1<div class="d-flex trk"><svg class="ico i14"><use href="#lock"/></svg><svg class="ico i14 white heavy"><use href="#spk"/></svg><svg class="ico i14 white" viewBox="0 0 14 14"><path d="M1 7q6-8 12 0-6 8-12 0z"/><circle cx="7" cy="7" r="1.800" fill="#fff"/></svg><svg class="ico i14"><use href="#mic"/></svg></div></div></div>
        <div class="lane alt l-audio d-flex"><div class="heads">Audio 1<div class="d-flex trk"><svg class="ico i14"><use href="#lock"/></svg><svg class="ico i14 white heavy"><use href="#spk"/></svg><svg class="ico i14"><use href="#mic"/></svg></div></div>
          <div class="tclip flex-fill"><svg class="wv" id="w4" viewBox="0 0 469 24" preserveAspectRatio="none" shape-rendering="crispEdges"></svg><span class="vol"></span><div class="tlabel d-flex align-items-center"><svg width="14" height="14" fill="#d7dddb"><use href="#clipnote"/></svg><span>Lustig_Reisen_Beats</span></div></div>
        </div>
        <div class="lane l-free"></div>
      </div>
      <div class="vbar"><i></i></div>
      </div>
      <div class="trackfoot d-flex align-items-center"><div class="heads text-center p-0">+</div><div class="hbar d-flex justify-content-between"><i></i><i></i></div></div>
      <span class="ph"><span class="flag"></span><span class="cut"><svg width="11" height="35" viewBox="0 0 11 35" fill="none" stroke="#ffd9d9" stroke-width="1.300"><ellipse cx="3" cy="21" rx="3" ry="4"/><path d="M6 13q-4 1-3 4M0 12q0 3 3 5"/></svg></span></span>
    </div>
    <div class="meter d-flex">
      <div>
        <svg width="56" height="252" id="mt" viewBox="0 0 56 252"></svg>
        <div class="lr d-flex"><span>L</span><span>R</span></div>
      </div>
      <div class="scale d-flex flex-column justify-content-between"><span>0</span><span>-6</span><span>-12</span><span>-18</span><span>-24</span><span>-30</span><span>-36</span><span>-42</span><span>-48</span><span>-54</span><span>dB</span></div>
    </div>
  </div>
</section>
</main>
<svg class="callout"><path d="M334 255L772 628" stroke="#55fbdc" stroke-width="4"/><path d="M781 637l-16-5 5-5 4-10z" fill="#55fbdc"/></svg>
</div>
<script src="https://cdn.jsdelivr.net/npm/bootstrap@5.3.0/dist/js/bootstrap.bundle.min.js"></script>
<script>
// Each wave is a list of "x:y" peaks; y grows downwards from the clip's top, base is its floor.
function parse(s, x0, base, k, shift) {
  return s.trim().split(/\s+/).map(p => p.split(':').map(Number)).map(([x, y]) => [(x - x0) / k + (shift || 0), (base - y) / k]);
}
function fill(id, pts, h, color, stepped, jitter) {
  let d = '', last = pts[pts.length - 1][0], i = 0;
  if (stepped) {
    for (let x = Math.round(pts[0][0]); x < last; x++) {
      while (i < pts.length - 2 && pts[i + 1][0] <= x) i++;
      const [a, p] = pts[i], [b, q] = pts[i + 1];
      let v = p + (q - p) * Math.max(0, Math.min(1, (x - a) / (b - a || 1)));
      for (const [px, pv] of pts) if (px >= x && px < x + 1) v = Math.max(v, pv);
      if (jitter) v += Math.sin(x * 2.7) * jitter;
      v = Math.max(0, Math.round(v));
      d += `M${x} ${h}V${h - v}h1V${h}z`;
    }
  } else d = `M${pts[0][0]} ${h}` + pts.map(p => `L${p[0].toFixed(1)} ${(h - p[1]).toFixed(1)}`).join('') + `L${last} ${h}z`;
  document.getElementById(id).insertAdjacentHTML('beforeend', `<path d="${d}" fill="${color}"/>`);
}
fill('w1', parse('584:350 588:201 592:213 596:267 602:348 604:392 612:390 616:366 620:360 624:372 634:372 640:388 650:405 658:418 666:433 672:433 675:380 678:245 682:201 686:240 690:328 694:380 700:395 706:410 710:350 714:328 718:368 728:370 734:390 742:400 750:395 756:413 764:413 768:398 770:312 774:228 780:228 783:318 786:413 794:425 808:435 820:460 828:462 832:440 840:395 850:382 858:380 861:310 866:312 870:378 880:385 884:400 888:400 892:340 896:243 900:222 904:265 908:348 912:410 920:425 926:405 930:375 936:380 940:412 950:412 956:335 960:292 964:350 968:380 978:370 986:318 990:234 994:234 998:310 1004:408 1020:418 1032:430 1042:430 1048:458 1072:458 1076:330 1080:210 1086:201 1090:245 1094:345 1100:375 1104:366 1116:380 1130:395 1138:385 1144:420 1148:432 1160:435 1168:440 1172:330 1176:228 1180:270 1184:322 1190:358 1196:400 1202:350 1206:318 1210:355 1220:385 1236:380 1244:405 1254:418 1258:418 1262:305 1266:198 1271:198', 584, 498, 3), 100, '#48bfa6', true);
const ov = '112:805 120:790 135:785 145:757 155:785 175:770 190:780 205:748 215:775 240:785 250:768 270:765 282:755 300:775 306:760 316:785 326:760 345:780 356:757 370:778 386:758 396:780 404:742 412:765 425:765 438:752 450:775 465:757 480:785 493:757 500:780 514:758 525:790 540:780 560:795 574:762 585:790 598:775 612:785 624:765 635:790 648:775 660:790 680:782 700:785 715:780 730:795 740:778 752:800 760:768 780:780 800:785 820:780 850:790 865:782 885:770 900:795 912:780 935:800 960:770 975:800 990:765 1002:752 1010:790 1030:785 1052:765 1070:800 1086:770 1100:803 1124:765 1140:800 1160:770 1178:758 1190:785 1200:780 1215:800 1228:790 1244:770 1252:800 1262:812 1270:819';
fill('w2', parse(ov, 24, 820, 3), 40, '#1e4b40', true, 1);
fill('w2', parse('24:800 34:785 40:760 48:805 56:795 62:770 70:800 80:795 86:758 92:795 100:780 108:785', 24, 820, 3), 40, '#48bfa6', true);
fill('w3', parse('60:430 75:412 85:425 95:420 105:360 112:405 120:400 132:375 140:430 150:400 160:410 170:405 183:355 190:410 200:425 215:380 235:350 240:400 255:405 270:385 280:380 290:410 305:395 318:410 328:370 336:405 350:415 357:350 365:430 385:410 405:390 415:410 425:430 440:400 450:410 456:385 465:410 478:400 495:410 505:435 515:425 528:430 536:360 548:435 560:435 567:405 575:435 585:370 595:415 607:395 618:430 628:400 640:435 652:420 665:345 675:430 690:435 700:405 708:365 716:425 725:415 740:405 756:430', 60, 455, 3), 52, '#327c69');
const left = parse('345:540 355:525 360:545 384:555 388:520 396:515 408:520 412:540 430:548 438:520 444:510 450:545 460:565 475:565 480:545 495:540 508:520 515:515 520:540 530:552 540:545 550:530 560:540 566:510 572:540 585:560 600:568 610:568 613:515 620:515 626:548 636:538 650:555 660:540 664:505 672:510 678:540 686:530 695:550 710:545 718:515 722:535 730:555 745:568 750:555 760:542 780:548 800:550 815:540 825:545 840:535 850:545 858:560 862:560', 345, 570, 3);
const right = parse('0:465 8:455 18:475 25:465 30:443 45:445 60:455 70:405 75:420 85:430 100:438 120:450 125:415 130:455 150:460 165:445 180:450 205:442 220:435 228:425 233:440 240:435 246:412 252:440 262:450 272:460 285:435 290:440 300:412 308:450 314:462 322:445 335:460 345:435 352:413 358:440 366:430 375:450 385:455 395:450 403:420 410:450 422:445 435:458 455:455 462:470 468:450 474:415 480:460 492:455 505:420 510:435 522:410 530:455 540:435 545:465 570:473 576:410 582:435 592:430 600:455 625:440 630:420 636:432 642:410 648:440 660:445 672:440 678:412 684:440 695:450 720:438 735:445 765:437 775:455 785:450 798:398 803:435 815:450 825:435 838:425 845:440 852:405 858:445 870:435 882:445', 0, 480, 3, 175);
fill('w4', left.concat(right), 24, '#48bfa6', true);
let r = '';
for (let i = 0; i <= 23; i++) {
  const major = i % 5 === 0, x = Math.round(i * 20.15) + .5;
  if (i) r += `<path d="M${x} 27V${major ? 19 : 23}"/>`;
  if (major) r += `<text x="${x - .5}" y="14" stroke="none">00:${String(i).padStart(2, '0')}</text>`;
}
document.getElementById('ruler').innerHTML = r;
let m = '<defs><linearGradient id="mg" x2="0" y2="1"><stop stop-color="#171b1e"/><stop offset="1" stop-color="#0a1219"/></linearGradient></defs><path fill="url(#mg)" d="M0 9h18v242H0zM24 9h18v242H24z"/><path stroke="#4a5056" d="M0 7.500h55"/><path stroke="#4a5056" stroke-width="2" d="M0 251h55M47 8v243"/>';
for (let i = 1; i < 50; i++) {
  const y = Math.round(7 + i * 4.88) + .5;
  m += i % 5 ? `<path stroke="#4a5056" d="M48 ${y}h3"/>` : `<path stroke="#4a5056" d="M18 ${y}h6M42 ${y}h13"/>`;
}
document.getElementById('mt').innerHTML = m;
</script>
</body>
</html>
